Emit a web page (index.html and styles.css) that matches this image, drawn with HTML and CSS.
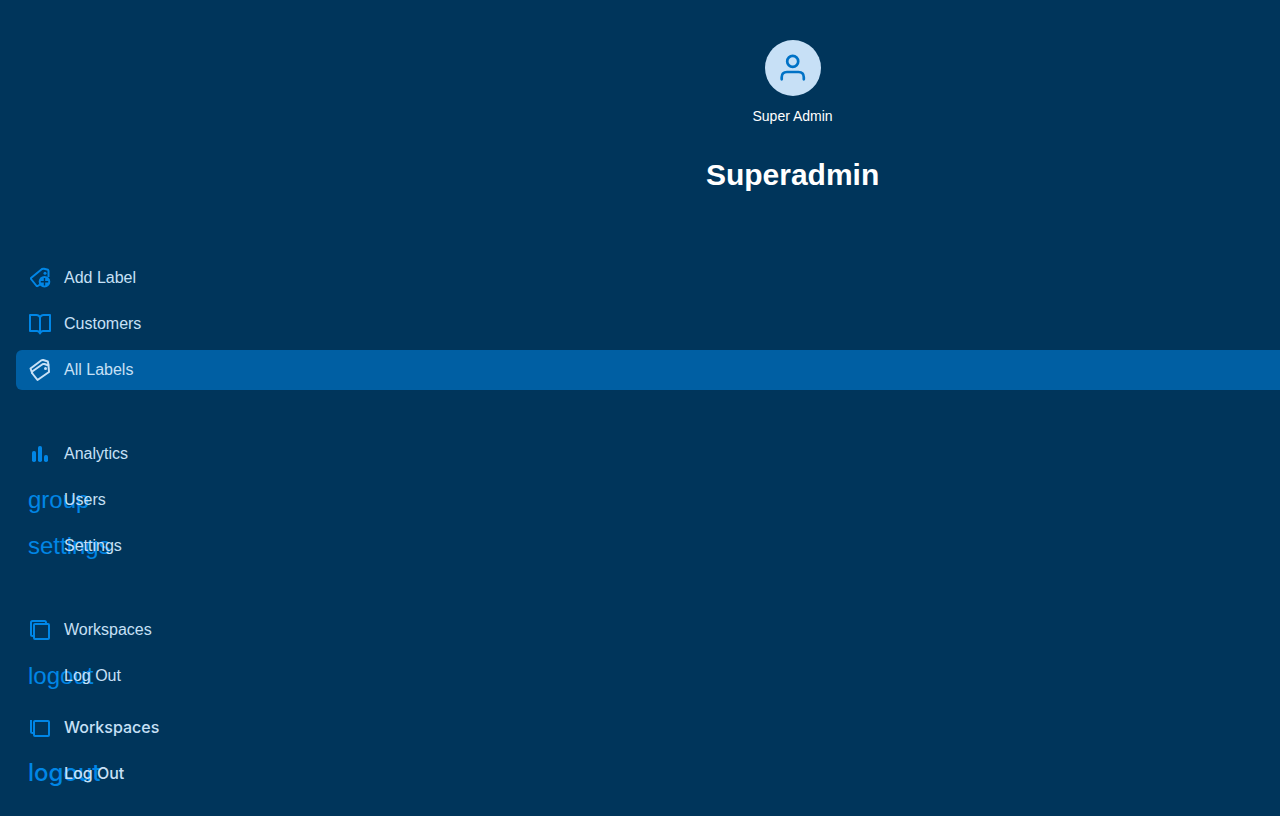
FILE: index.html
```html
<!DOCTYPE html>
<html lang="en">
<head>
<meta charset="utf-8">
<title>Superadmin</title>
<link rel="stylesheet" href="styles.css">
</head>
<body>
<aside class="sidebar">
  <header class="profile">
    <div class="avatar">
      <svg width="32" height="32" viewBox="0 0 32 32" fill="none" stroke="currentColor" stroke-width="2.7" stroke-linecap="round"><circle cx="15.700" cy="9.400" r="5.500"/><path d="M4.700 27.300V25.300Q4.700 20 10 20H21.500Q26.800 20 26.800 25.300V27.300"/></svg>
    </div>
    <p class="role">Super Admin</p>
    <h1 class="name">Superadmin</h1>
  </header>
  <nav class="menu">
    <div class="group">
      <a class="item" href="#add-label">
        <svg class="icon" viewBox="0 0 24 24" fill="none" stroke="currentColor" stroke-width="2" stroke-linejoin="round"><path d="M9 20.500 3 13 3 12 14 3Q15 2.500 16 2.700L20 3.800 20.500 5V11M9 20.500 12 18.500"/><circle cx="17" cy="7.200" r="1.500" fill="currentColor" stroke="none"/><circle cx="16.500" cy="15.700" r="5.800" fill="currentColor" stroke="none"/><path class="cut" d="M16.500 12V19.400M12.800 15.700H20.200" stroke-width="1.400"/></svg>
        <span>Add Label</span>
      </a>
      <a class="item" href="#customers">
        <svg class="icon" viewBox="0 0 24 24" fill="none" stroke="currentColor" stroke-width="2" stroke-linejoin="round"><path d="M12 5.500Q11 3 8.500 3H2V19H9Q11 19 12 21.500Q13 19 15 19H22V3H15.500Q13 3 12 5.500V21.500"/></svg>
        <span>Customers</span>
      </a>
      <a class="item active" href="#all-labels" aria-current="page">
        <svg class="icon" viewBox="0 0 24 24" fill="none" stroke="currentColor" stroke-width="2" stroke-linejoin="round"><path d="M9.500 22 4 15 4.200 13.500 14.500 6.200Q15.500 5.700 16.500 6L20.500 7.500 21 14Z"/><path d="M4.300 15.500 2.500 10.500 13.500 2.300Q14.300 1.800 15.200 2L19.800 3.500 20.600 7.500"/><circle cx="17.500" cy="10.500" r="1.500" fill="currentColor" stroke="none"/></svg>
        <span>All Labels</span>
      </a>
    </div>
    <div class="group">
      <a class="item" href="#analytics">
        <svg class="icon" viewBox="0 0 24 24" fill="currentColor"><rect x="4" y="9" width="4" height="11" rx="1.800"/><rect x="10" y="4" width="4" height="16" rx="1.800"/><rect x="16" y="13" width="4" height="7" rx="1.800"/></svg>
        <span>Analytics</span>
      </a>
      <a class="item" href="#users"><i class="icon ligature">group</i><span>Users</span></a>
      <a class="item" href="#settings"><i class="icon ligature">settings</i><span>Settings</span></a>
    </div>
    <div class="group">
      <a class="item" href="#workspaces">
        <svg class="icon" viewBox="0 0 24 24" fill="none" stroke="currentColor" stroke-width="2" stroke-linejoin="round"><rect x="6" y="6" width="15" height="15" rx="1"/><path d="M6 18H4.500Q3 18 3 16.500V4.500Q3 3 4.500 3H16.500Q18 3 18 4.500V6"/></svg>
        <span>Workspaces</span>
      </a>
      <a class="item" href="#logout"><i class="icon ligature">logout</i><span>Log Out</span></a>
    </div>
  </nav>
  <footer class="menu pinned">
    <div class="group">
      <a class="item" href="#workspaces">
        <svg class="icon" viewBox="0 0 24 24" fill="none" stroke="currentColor" stroke-width="2" stroke-linejoin="round"><rect x="6" y="6" width="15" height="15" rx="1"/><path d="M6 18H4.500Q3 18 3 16.500V5"/></svg>
        <span>Workspaces</span>
      </a>
      <a class="item" href="#logout"><i class="icon ligature">logout</i><span>Log Out</span></a>
    </div>
  </footer>
</aside>
</body>
</html>
```
FILE: styles.css
```css
* { box-sizing: border-box; }

body {
  margin: 0;
  min-height: 100vh;
  overflow: hidden;
  background: #00355b;
  font-family: "Liberation Sans", Arial, sans-serif;
}

/* The panel runs past the right edge of the window. */
.sidebar {
  width: calc(124% - 2px);
  padding-top: 40px;
}

.profile {
  display: flex;
  flex-direction: column;
  align-items: center;
  padding-bottom: 63px;
  color: #fff;
}

.avatar {
  display: flex;
  align-items: center;
  justify-content: center;
  width: 56px;
  height: 56px;
  border-radius: 50%;
  background: #c7e0f6;
  color: #0072c6;
}

.role {
  margin: 10px 0 0;
  font-size: 14px;
  line-height: 20px;
}

.name {
  margin: 29px 0 0;
  font-size: 30px;
  line-height: 40px;
}

.menu {
  display: flex;
  flex-direction: column;
  gap: 44px;
  padding: 0 16px;
}

.group {
  display: flex;
  flex-direction: column;
  gap: 6px;
}

.item {
  display: flex;
  align-items: center;
  gap: 12px;
  height: 40px;
  padding: 0 12px;
  border-radius: 6px;
  color: #c7e0f6;
  font-size: 16px;
  line-height: 24px;
  text-decoration: none;
}

.item span { position: relative; }

.active { background: #005fa3; }

.icon {
  flex: none;
  width: 24px;
  height: 24px;
  color: #0086e6;
}

.active .icon { color: #c7e0f6; }

.cut { stroke: #00355b; }

.ligature {
  font-size: 24px;
  font-style: normal;
  line-height: 24px;
  white-space: nowrap;
}

.pinned {
  margin-top: 11px;
  padding-bottom: 22px;
}

.pinned .item {
  font-family: Inter, sans-serif;
  font-weight: 500;
}
```
